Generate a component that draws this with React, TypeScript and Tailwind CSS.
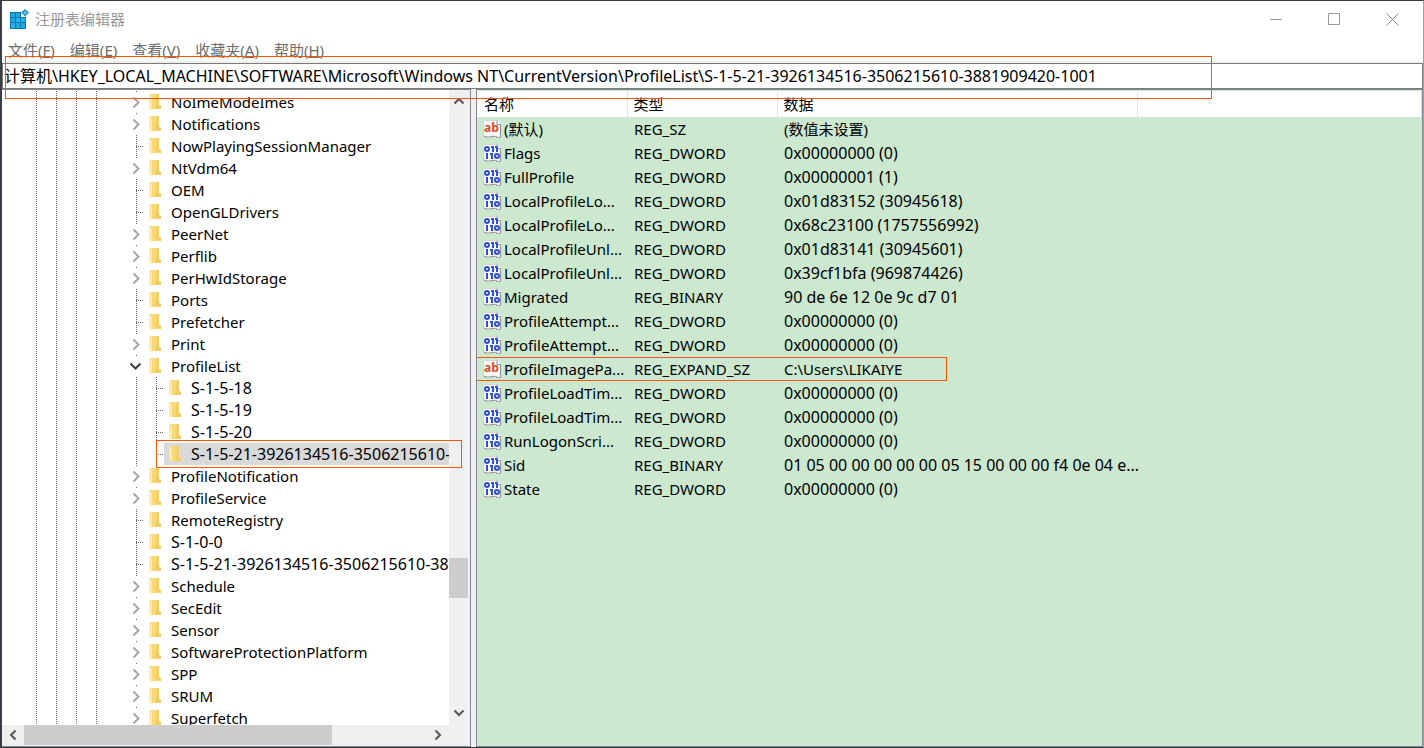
import { ChangeEvent, useState } from 'react';

type TreeKey = { name: string; state: 'closed' | 'open' | 'leaf'; child?: boolean; last?: boolean };

const keys: TreeKey[] = [
  { name: 'NoImeModeImes', state: 'closed' },
  { name: 'Notifications', state: 'closed' },
  { name: 'NowPlayingSessionManager', state: 'leaf' },
  { name: 'NtVdm64', state: 'closed' },
  { name: 'OEM', state: 'leaf' },
  { name: 'OpenGLDrivers', state: 'leaf' },
  { name: 'PeerNet', state: 'closed' },
  { name: 'Perflib', state: 'closed' },
  { name: 'PerHwIdStorage', state: 'closed' },
  { name: 'Ports', state: 'leaf' },
  { name: 'Prefetcher', state: 'leaf' },
  { name: 'Print', state: 'closed' },
  { name: 'ProfileList', state: 'open' },
  { name: 'S-1-5-18', state: 'leaf', child: true },
  { name: 'S-1-5-19', state: 'leaf', child: true },
  { name: 'S-1-5-20', state: 'leaf', child: true },
  { name: 'S-1-5-21-3926134516-3506215610-3881909420-1001', state: 'leaf', child: true, last: true },
  { name: 'ProfileNotification', state: 'closed' },
  { name: 'ProfileService', state: 'closed' },
  { name: 'RemoteRegistry', state: 'leaf' },
  { name: 'S-1-0-0', state: 'leaf' },
  { name: 'S-1-5-21-3926134516-3506215610-3881909420-1001', state: 'leaf' },
  { name: 'Schedule', state: 'closed' },
  { name: 'SecEdit', state: 'closed' },
  { name: 'Sensor', state: 'closed' },
  { name: 'SoftwareProtectionPlatform', state: 'closed' },
  { name: 'SPP', state: 'closed' },
  { name: 'SRUM', state: 'closed' },
  { name: 'Superfetch', state: 'closed' },
];

const values = [
  ['(默认)', 'REG_SZ', '(数值未设置)'],
  ['Flags', 'REG_DWORD', '0x00000000 (0)'],
  ['FullProfile', 'REG_DWORD', '0x00000001 (1)'],
  ['LocalProfileLo...', 'REG_DWORD', '0x01d83152 (30945618)'],
  ['LocalProfileLo...', 'REG_DWORD', '0x68c23100 (1757556992)'],
  ['LocalProfileUnl...', 'REG_DWORD', '0x01d83141 (30945601)'],
  ['LocalProfileUnl...', 'REG_DWORD', '0x39cf1bfa (969874426)'],
  ['Migrated', 'REG_BINARY', '90 de 6e 12 0e 9c d7 01'],
  ['ProfileAttempt...', 'REG_DWORD', '0x00000000 (0)'],
  ['ProfileAttempt...', 'REG_DWORD', '0x00000000 (0)'],
  ['ProfileImagePa...', 'REG_EXPAND_SZ', 'C:\\Users\\LIKAIYE'],
  ['ProfileLoadTim...', 'REG_DWORD', '0x00000000 (0)'],
  ['ProfileLoadTim...', 'REG_DWORD', '0x00000000 (0)'],
  ['RunLogonScri...', 'REG_DWORD', '0x00000000 (0)'],
  ['Sid', 'REG_BINARY', '01 05 00 00 00 00 00 05 15 00 00 00 f4 0e 04 e...'],
  ['State', 'REG_DWORD', '0x00000000 (0)'],
];

const menus = [
  ['文件', 'F'],
  ['编辑', 'E'],
  ['查看', 'V'],
  ['收藏夹', 'A'],
  ['帮助', 'H'],
];

function AppIcon() {
  return (
    <svg width="20" height="20" viewBox="0 0 20 20" className="shrink-0">
      <path d="M1 3h11v5h5v12H1z" fill="#0a78b4" />
      <g fill="#1fa7e0">
        <path d="M2 4h4v4H2zM7 4h4v4H7z" />
        <path d="M2 9h4v4H2zM12 14h4v5h-4z" />
        <path d="M7 14h4v5H7z" />
      </g>
      <path d="M7 9h4v4H7zM12 9h4v4h-4zM2 14h4v5H2z" fill="#2fb4ea" />
      <path d="M16 0l4 3.500-4 4-4-4z" fill="#2a8fbf" />
      <path d="M16 2l2 1.500-2 2-2-2z" fill="#5cc8ee" />
    </svg>
  );
}

function Folder() {
  return (
    <svg width="16" height="18" viewBox="0 0 16 18" className="shrink-0">
      <path d="M2 1h9v11l2 1v3H3z" fill="#f8d978" />
      <path d="M9 1h2v11l2 1v3H7z" fill="#f2cd66" />
      <path d="M1 1l3 2v14.500L1 15z" fill="#ffe9a6" />
    </svg>
  );
}

// expander arrow, or the dotted branch when the key has no subkeys
function Branch({ item }: { item: TreeKey }) {
  const dots = { stroke: '#666', strokeDasharray: '1 1' };
  return (
    <svg width="28" height="22" viewBox="0 0 28 22" fill="none" className="shrink-0">
      {item.child && <path d="M0.500 0v22" {...dots} />}
      {item.state === 'leaf' && <path d={item.last ? 'M20.500 0v12' : 'M20.500 0v22'} {...dots} />}
      {item.state === 'leaf' && <path d="M20 11.500h9" {...dots} />}
      {item.state !== 'leaf' && <path d="M20.500 0v1" stroke="#666" />}
      {item.state === 'closed' && <path d="M17.500 6.500l5 5-5 5" stroke="#a6a6a6" strokeWidth="2" />}
      {item.state === 'open' && <path d="M14.500 8.500l5 5 5-5" stroke="#404040" strokeWidth="2" />}
    </svg>
  );
}

function ValueIcon({ text }: { text: boolean }) {
  return (
    <svg width="20" height="20" viewBox="0 0 20 20" className="shrink-0">
      <path d="M1 1h14l4 4v14c-3 .8-4-1.500-7-1.200-4 .4-7 1.200-11-.8z" fill="#f8f8fa" />
      <path d="M1.500 17V1.500H15" fill="none" stroke="#d4d4da" />
      <path d="M15 1.500v4h4M18.500 5v13.500c-3 .8-4-1.500-7-1.200-4 .4-6 1.700-10-.3" fill="none" stroke="#8e8e96" />
      {text ? (
        <text x="2" y="13" fill="#dc4a2c" className="font-['Open_Sans',sans-serif] text-[12px] font-bold">
          ab
        </text>
      ) : (
        <g fill="none" stroke="#2f50d8" strokeWidth="2">
          <ellipse cx="5" cy="6" rx="2" ry="2" />
          <path d="M11 3v6M15 3v6M9 4h2M13 4h2" />
          <path d="M5 10v6M10 10v6M4 11h1M8 11h2" />
          <ellipse cx="15" cy="13" rx="2" ry="2" />
        </g>
      )}
    </svg>
  );
}

function Arrow({ d }: { d: string }) {
  return (
    <svg width="12" height="12" viewBox="0 0 12 12" fill="none" stroke="#555" strokeWidth="2">
      <path d={d} />
    </svg>
  );
}

function KeyTree() {
  return (
    <ul className="min-h-0 min-w-0 flex-1 overflow-hidden bg-white pt-px">
      {keys.map((item, i) => (
        <li key={i} className="flex h-[22px] pl-[34px]">
          {[0, 1, 2, 3].map((n) => (
            <svg key={n} width="20" height="22" className="shrink-0">
              <path d="M0.500 0v22" stroke="#666" strokeDasharray="1 1" />
            </svg>
          ))}
          {item.child && <span className="w-5 shrink-0" />}
          <Branch item={item} />
          <button
            className={`flex h-[22px] items-center gap-[7px] whitespace-nowrap pl-1 ${item.last ? 'bg-[#d9d9d9]' : ''} ${item.name.startsWith('S-1') ? 'text-[16px]' : ''}`}
          >
            <Folder />
            {item.name}
          </button>
        </li>
      ))}
    </ul>
  );
}

export default function App() {
  const [path, setPath] = useState(
    '计算机\\HKEY_LOCAL_MACHINE\\SOFTWARE\\Microsoft\\Windows NT\\CurrentVersion\\ProfileList\\S-1-5-21-3926134516-3506215610-3881909420-1001'
  );

  return (
    <div className="relative flex h-screen flex-col overflow-hidden border-y border-l-2 border-r border-t-[#3a3a3a] border-b-[#2c3542] border-l-[#3a3d44] border-r-[#a0a0a0] bg-white font-['Noto_Sans','Noto_Sans_CJK_SC',sans-serif] text-[15px] leading-[22px] text-black">
      <header className="flex h-9 shrink-0 items-center pl-[7px] pr-0.5 text-[#999]">
        <AppIcon />
        <h1 className="flex-1 pl-1.5">注册表编辑器</h1>
        <button aria-label="最小化" className="flex w-[58px] justify-center">
          <svg width="13" height="13" stroke="#999"><path d="M0 6.500h12" /></svg>
        </button>
        <button aria-label="最大化" className="flex w-[58px] justify-center">
          <svg width="13" height="13" fill="none" stroke="#999"><path d="M0.500 0.500h11v11h-11z" /></svg>
        </button>
        <button aria-label="关闭" className="flex w-[58px] justify-center">
          <svg width="13" height="13" stroke="#888"><path d="M0.500 0.500l12 12M12.500 0.500l-12 12" /></svg>
        </button>
      </header>

      <nav className="flex h-6 shrink-0 items-end gap-[15px] pl-1.5 text-[#6d6d6d]">
        {menus.map(([label, key]) => (
          <button key={key} className="h-[22px] whitespace-nowrap">
            {label}(<span className="underline">{key}</span>)
          </button>
        ))}
      </nav>

      <div className="relative shrink-0 border-t-2 border-[#f0f0f0]">
        <input
          aria-label="路径"
          value={path}
          onChange={(e: ChangeEvent<HTMLInputElement>) => setPath(e.target.value)}
          className="block h-[26px] w-full border border-[#7a7a7a] pb-0.5 pl-px text-[16px] outline-none"
        />
        <div className="pointer-events-none absolute -top-[7px] left-[3px] z-10 h-[43px] w-[1207px] border border-[#ff5500]" />
      </div>

      <main className="flex min-h-0 flex-1 bg-[#f0f0f0]">
        <section className="relative flex w-[469px] shrink-0 flex-col border-y border-r border-[#828790] pb-px">
          <div className="flex min-h-0 flex-1">
            <KeyTree />
            <div className="flex w-[21px] shrink-0 flex-col pr-0.5">
              <button aria-label="向上滚动" className="flex h-[22px] items-center justify-center">
                <Arrow d="M1.500 8.500L6 4l4.500 4.500" />
              </button>
              <div className="flex flex-1 flex-col">
                <div className="grow-[448]" />
                <div className="h-10 bg-[#cdcdcd]" />
                <div className="grow-[104]" />
              </div>
              <button aria-label="向下滚动" className="flex h-6 items-center justify-center">
                <Arrow d="M1.500 3.500L6 8l4.500-4.500" />
              </button>
            </div>
          </div>
          <div className="flex h-5 shrink-0">
            <button aria-label="向左滚动" className="flex w-[22px] items-center justify-center">
              <Arrow d="M8.500 1.500L4 6l4.500 4.500" />
            </button>
            <div className="w-[308px] bg-[#cdcdcd]" />
            <div className="flex-1" />
            <button aria-label="向右滚动" className="mr-[22px] flex w-5 items-center justify-center">
              <Arrow d="M3.500 1.500L8 6l-4.500 4.500" />
            </button>
          </div>
          <div className="pointer-events-none absolute left-[154px] top-[350px] h-7 w-[306px] border border-[#ff5500]" />
        </section>

        <section className="ml-[5px] min-w-0 flex-1 overflow-hidden border border-[#828790] bg-[#cce8cf] pr-px pt-px">
          <table className="w-full table-fixed border-collapse text-left">
            <thead>
              <tr className="h-[26px] bg-white">
                <th className="w-[150px] border-r border-[#e5e5e5] p-0 pl-[7px] font-normal">名称</th>
                <th className="w-[150px] border-r border-[#e5e5e5] p-0 pl-1.5 font-normal">类型</th>
                <th className="w-[360px] border-r border-[#e5e5e5] p-0 pl-1.5 font-normal">数据</th>
                <th className="p-0" />
              </tr>
            </thead>
            <tbody>
              {values.map(([name, type, data], i) => (
                <tr key={i} className="h-6 whitespace-nowrap">
                  <td className="relative p-0 pl-[5px]">
                    <div className="flex items-center gap-0.5">
                      <ValueIcon text={type.endsWith('SZ')} />
                      {name}
                    </div>
                    {type === 'REG_EXPAND_SZ' && (
                      <div className="pointer-events-none absolute -left-px top-0 z-10 h-6 w-[471px] border border-[#ff5500]" />
                    )}
                  </td>
                  <td className="p-0 pl-[7px]">{type}</td>
                  <td className={`p-0 pl-[7px] ${/^\d/.test(data) ? 'text-[16px]' : ''}`}>{data}</td>
                  <td className="p-0" />
                </tr>
              ))}
            </tbody>
          </table>
        </section>
      </main>
    </div>
  );
}
